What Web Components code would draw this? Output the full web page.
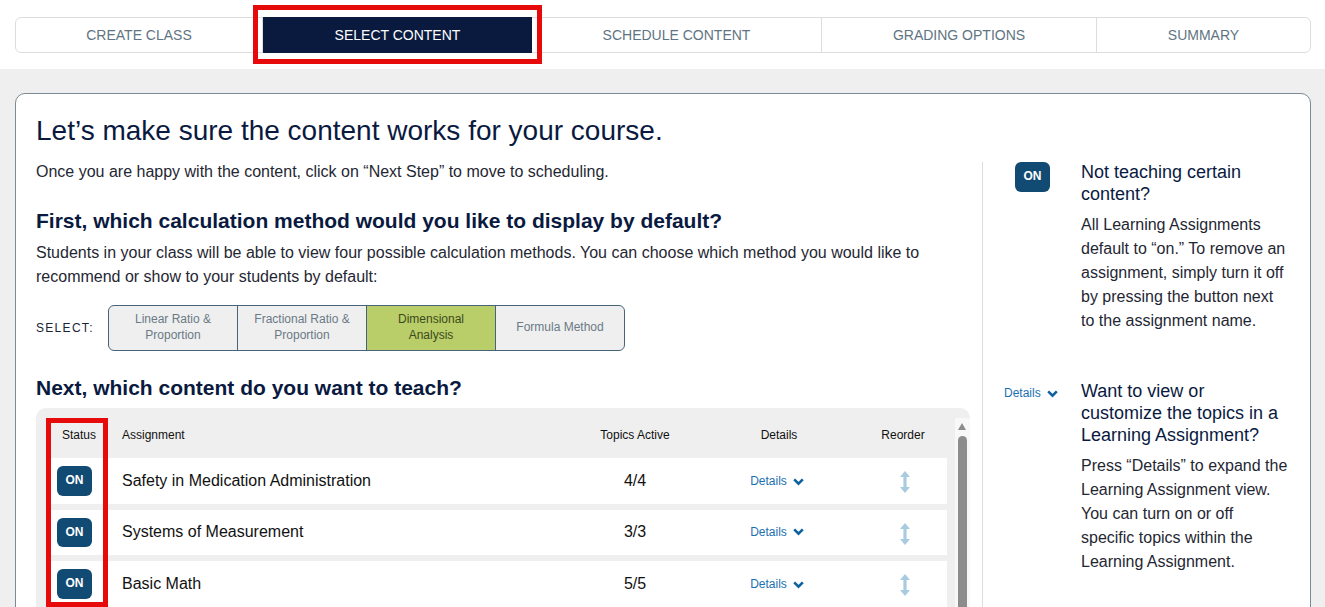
<!DOCTYPE html>
<html><head><meta charset="utf-8">
<style>
html,body{margin:0;padding:0;height:607px;overflow:hidden;background:#efefef;font-family:"Liberation Sans",Arial,sans-serif;color:#0a1a3f}
</style></head><body>
<template id="t-step"><style>
:host{display:flex;align-items:center;justify-content:center;font-size:14px;color:#5f7482;border-right:1px solid #ddd;box-sizing:border-box}
:host(:last-child){border-right:0}
:host([active]){background:#0a1a3f;color:#fff;border-right:0;position:relative;margin:-1px 0}
.mark{display:none;position:absolute;left:-10px;right:-10px;top:-12px;bottom:-11px;border:5px solid #e60a0a;box-sizing:border-box}
:host([active]) .mark{display:block}
</style><slot></slot><span class="mark"></span></template>

<template id="t-stepper"><style>
:host{display:block;background:#fff;height:69px;padding:17px 14px 0 15px;box-sizing:border-box}
.b{display:grid;grid-template-columns:247px 269px 290px 275px 1fr;height:36px;border:1px solid #ddd;border-radius:6px;box-sizing:border-box}
</style><div class="b"><slot></slot></div></template>

<template id="t-card"><style>
:host{display:block;margin:24px 14px 0 15px;background:#fff;border:1px solid #7b8a96;border-radius:10px;padding:20px 20px 0 20px;height:600px;box-sizing:border-box}
h1{font-weight:400;font-size:28px;line-height:34px;margin:0;color:#0a1a3f}
.cols{display:grid;grid-template-columns:934px 1fr;margin-top:14px}
.l{margin-top:-2px}
.r{margin-left:12px;border-left:1px solid #ddd;display:flex;flex-direction:column;padding-left:32px}
</style><h1><slot name="title"></slot></h1><div class="cols"><div class="l"><slot></slot></div><div class="r"><slot name="side"></slot></div></div></template>

<template id="t-on"><style>
:host{display:inline-flex;align-items:center;justify-content:center;width:35px;height:var(--on-h,30px);border-radius:6px;background:#114a72;color:#fff;font-size:12px;font-weight:700;padding-bottom:2px;box-sizing:border-box;font-family:"Liberation Sans",Arial,sans-serif}
</style>ON</template>

<template id="t-seg"><style>
:host{display:flex;align-items:center;gap:14px;margin-top:16px}
.lab{font-size:12px;letter-spacing:1.3px;color:#1b2433;width:58px}
.g{display:grid;grid-template-columns:129px 129px 129px 1fr;width:517px;height:46px;box-sizing:border-box;border:1px solid #48647a;border-radius:6px;overflow:hidden;background:#efefef}
</style><span class="lab">SELECT:</span><div class="g"><slot></slot></div></template>

<template id="t-opt"><style>
:host{display:flex;align-items:center;justify-content:center;text-align:center;font-size:12px;line-height:16px;color:#6a7a86;border-right:1px solid #48647a;padding:0 10px 2px}
:host(:last-child){border-right:0}
:host([sel]){background:#b9cd68;color:#3c4a20}
</style><slot></slot></template>

<template id="t-table"><style>
:host{display:block;position:relative;margin-top:7px;background:#efefef;border-radius:10px 10px 0 0;height:240px;overflow:hidden}
.head{display:grid;grid-template-columns:75px 1fr 120px 168px 84px;margin:0 23px 0 11px;height:50px;align-items:center;font-size:12px;color:#111;box-sizing:border-box;padding-top:4px}
.head span:nth-child(1),.head span:nth-child(3),.head span:nth-child(4),.head span:nth-child(5){text-align:center}
.head span:nth-child(1){padding-left:2px;padding-right:13px;box-sizing:border-box}
.head span:nth-child(5){padding-right:4px}
.rows{display:flex;flex-direction:column;gap:6px;margin:0 23px 0 11px}
.sb{position:absolute;right:0;top:10px;bottom:0;width:15px;background:#f8f8f8}
.up{position:absolute;left:3px;top:5px;width:0;height:0;border-left:4.5px solid transparent;border-right:4.5px solid transparent;border-bottom:7px solid #8c8c8c}
.th{position:absolute;left:3px;top:18px;width:9px;bottom:-20px;background:#8c8c8c;border-radius:5px 5px 0 0}
.mark{position:absolute;left:10px;top:10px;width:62px;height:189px;border:5px solid #e60a0a;box-sizing:border-box;pointer-events:none}
</style><div class="head"><span>Status</span><span>Assignment</span><span>Topics Active</span><span>Details</span><span>Reorder</span></div>
<div class="rows"><slot></slot></div><div class="sb"><div class="up"></div><div class="th"></div></div><div class="mark"></div></template>

<template id="t-row"><style>
:host{display:grid;grid-template-columns:75px 1fr 120px 168px 84px;align-items:center;background:#fff;height:46px;font-size:16px;color:#111}
:host(:nth-child(2)){height:45px;--on-h:29px;--row-nudge:2px}
.s{padding-left:10px;display:flex}
.a,.t,.mid{padding-bottom:var(--row-nudge,0)}
.t{text-align:center}
.r{display:flex;justify-content:center;padding-top:2px}
.mid{display:flex;justify-content:center;padding-right:4px}
svg{display:block}
</style><div class="s"><x-on></x-on></div><div class="a"><slot></slot></div><div class="t"><slot name="n"></slot></div><div class="mid"><x-details></x-details></div><div class="r"><svg width="10" height="22" viewBox="0 0 10 22"><path d="M5 0 10 6H6.6V16H10L5 22 0 16H3.4V6H0Z" fill="#a9cbe0"/></svg></div></template>

<template id="t-details"><style>
:host{display:inline-flex;align-items:center;gap:6px;font-size:12px;color:#1a70b0;font-family:"Liberation Sans",Arial,sans-serif}
svg{display:block;margin-top:1px}
</style>Details<svg width="11" height="8" viewBox="0 0 11 8"><path d="M1.2 1.4 5.5 5.6 9.8 1.4" fill="none" stroke="#0b609f" stroke-width="2.6"/></svg></template>

<template id="t-tip"><style>
:host{display:grid;grid-template-columns:66px 208px;box-sizing:border-box}
.i{display:flex;align-items:flex-start}
h3{font-weight:400;font-size:18px;line-height:22px;margin:-1px 0 8px;color:#0a1a3f}
p{margin:0;font-size:16px;line-height:24px;color:#1f2733}
</style><div class="i"><slot name="icon"></slot></div><div><h3><slot name="h"></slot></h3><p><slot></slot></p></div></template>

<script>
function def(tag,id){customElements.define(tag,class extends HTMLElement{constructor(){super();this.attachShadow({mode:"open"}).appendChild(document.getElementById(id).content.cloneNode(true));}});}
[["x-step","t-step"],["x-stepper","t-stepper"],["x-card","t-card"],["x-on","t-on"],["x-seg","t-seg"],["x-opt","t-opt"],["x-table","t-table"],["x-row","t-row"],["x-details","t-details"],["x-tip","t-tip"]].forEach(a=>def(a[0],a[1]));
</script>

<x-stepper>
<x-step>CREATE CLASS</x-step><x-step active>SELECT CONTENT</x-step><x-step>SCHEDULE CONTENT</x-step><x-step>GRADING OPTIONS</x-step><x-step>SUMMARY</x-step>
</x-stepper>
<x-card>
<span slot="title">Let’s make sure the content works for your course.</span>
<div style="font-size:16px;line-height:24px;color:#1f2733;">Once you are happy with the content, click on “Next Step” to move to scheduling.</div>
<div style="font-size:21px;font-weight:700;line-height:26px;margin-top:24px;color:#0a1a3f">First, which calculation method would you like to display by default?</div>
<div style="font-size:16px;line-height:24px;color:#1f2733;margin-top:7px;width:900px">Students in your class will be able to view four possible calculation methods. You can choose which method you would like to recommend or show to your students by default:</div>
<x-seg><x-opt>Linear Ratio &amp; Proportion</x-opt><x-opt>Fractional Ratio &amp; Proportion</x-opt><x-opt sel>Dimensional Analysis</x-opt><x-opt>Formula Method</x-opt></x-seg>
<div style="font-size:21px;font-weight:700;line-height:26px;margin-top:24px;color:#0a1a3f">Next, which content do you want to teach?</div>
<x-table>
<x-row>Safety in Medication Administration<span slot="n">4/4</span></x-row>
<x-row>Systems of Measurement<span slot="n">3/3</span></x-row>
<x-row>Basic Math<span slot="n">5/5</span></x-row>
</x-table>
<x-tip slot="side" style="margin-bottom:48px"><x-on slot="icon"></x-on><span slot="h">Not teaching certain content?</span>All Learning Assignments default to “on.” To remove an assignment, simply turn it off by pressing the button next to the assignment name.</x-tip>
<x-tip slot="side" style="margin-left:-11px;grid-template-columns:77px 208px"><x-details slot="icon" style="margin-top:5px"></x-details><span slot="h">Want to view or customize the topics in a Learning Assignment?</span>Press “Details” to expand the Learning Assignment view. You can turn on or off specific topics within the Learning Assignment.</x-tip>
</x-card>
</body></html>
